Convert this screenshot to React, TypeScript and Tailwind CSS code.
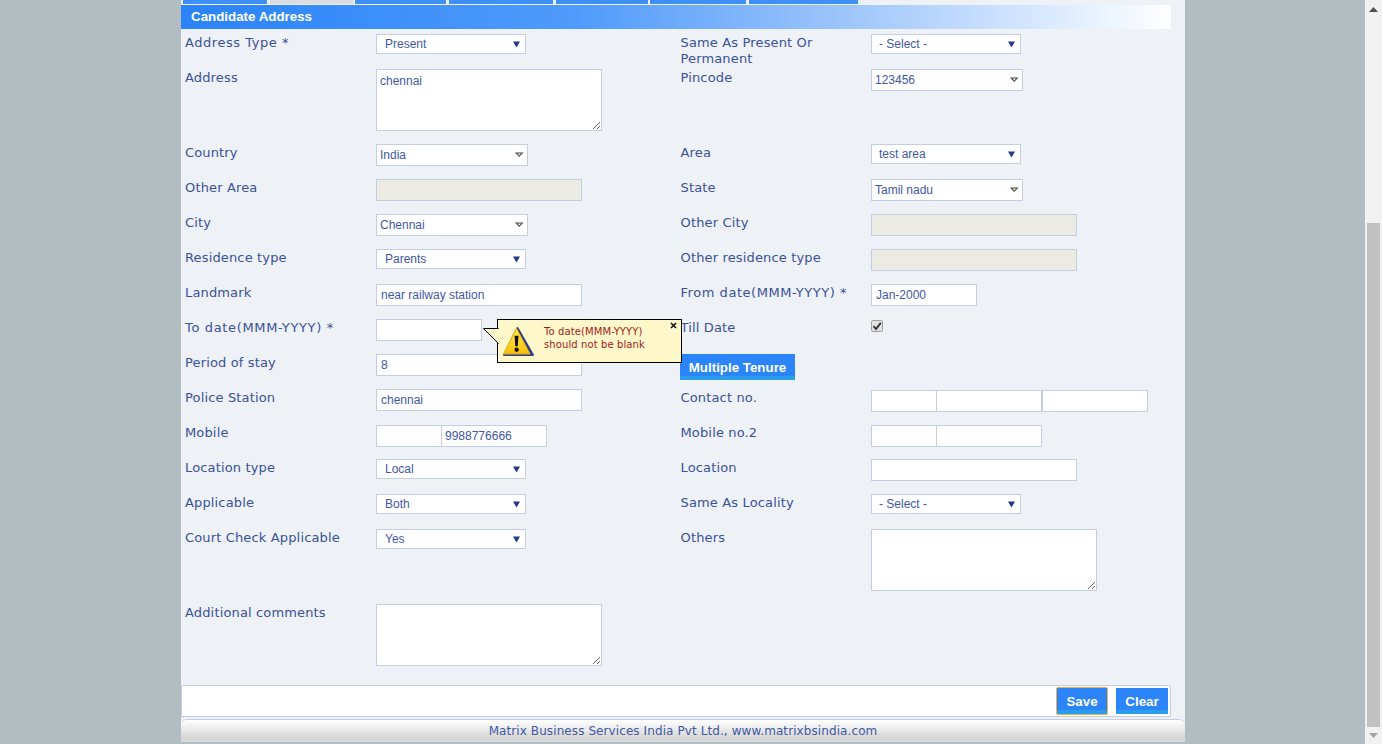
import React from "react";

const labelCls = "text-[13px] leading-4 tracking-[0.15px] text-[#3a5299] [font-family:'DejaVu_Sans',Verdana,sans-serif]";
const fieldCls = "border border-[#c5cde3] text-[12px] text-[#3f58a3] [font-family:'Liberation_Sans',Arial,sans-serif] outline-none";

function Label({ children, cls = "" }: { children: React.ReactNode; cls?: string }) {
  return <div className={`${labelCls} pl-1 pt-[1px] pr-6 ${cls}`}>{children}</div>;
}

function SelectA({ value, right = false }: { value: string; right?: boolean }) {
  return (
    <div className={`${fieldCls} w-[150px] h-5 bg-white flex items-center justify-between ${right ? "pl-[7px]" : "pl-2"} pr-[5px]`}>
      <span>{value}</span>
      <svg width="7" height="7" viewBox="0 0 7 7"><path d="M0 0.5h7L3.5 6.5z" fill="#23398a" /></svg>
    </div>
  );
}

function SelectB({ value }: { value: string }) {
  return (
    <div className={`${fieldCls} w-[152px] h-[22px] bg-white flex items-center justify-between pl-[3px] pr-[3px]`}>
      <span>{value}</span>
      <svg width="9" height="6" viewBox="0 0 9 6">
        <path d="M0 0.5h8.5L4.2 5z" fill="#444" />
        <path d="M2.4 1.5h3.8L4.2 3.4z" fill="#eee" />
      </svg>
    </div>
  );
}

function TextInput({ w, value = "", disabled = false, cls = "" }: { w: string; value?: string; disabled?: boolean; cls?: string }) {
  return (
    <input
      readOnly
      value={value}
      className={`${fieldCls} ${w} block h-[22px] px-[4px] ${disabled ? "bg-[#ebebe4]" : "bg-white"} ${cls}`}
    />
  );
}

function Area({ value = "" }: { value?: string }) {
  return (
    <textarea
      readOnly
      value={value}
      className={`${fieldCls} w-[226px] h-[62px] bg-white px-[3px] py-[2px] block resize`}
    />
  );
}

function Btn({ children, cls }: { children: React.ReactNode; cls: string }) {
  return (
    <button className={`pt-px bg-[linear-gradient(#2b84f8_0,#2b84f8_84%,#2a9ded_84%,#2a9ded_100%)] text-white font-bold text-[13.33px] [font-family:'Liberation_Sans',Arial,sans-serif] ${cls}`}>
      {children}
    </button>
  );
}

type Row = { h: string; a: string; af: React.ReactNode; b: string; bf: React.ReactNode; at?: string; bt?: string };

const rows: Row[] = [
  { h: "h-[35px]", a: "Address Type *", at: "tracking-[0.55px]", af: <SelectA value="Present" />, b: "Same As Present Or Permanent", bf: <SelectA right value="- Select -" /> },
  { h: "h-[75px]", a: "Address", af: <Area value="chennai" />, b: "Pincode", bf: <SelectB value="123456" /> },
  { h: "h-[35px]", a: "Country", af: <SelectB value="India" />, b: "Area", bf: <SelectA right value="test area" /> },
  { h: "h-[35px]", a: "Other Area", af: <TextInput w="w-[206px]" disabled />, b: "State", bf: <SelectB value="Tamil nadu" /> },
  { h: "h-[35px]", a: "City", af: <SelectB value="Chennai" />, b: "Other City", bf: <TextInput w="w-[206px]" disabled /> },
  { h: "h-[35px]", a: "Residence type", af: <SelectA value="Parents" />, b: "Other residence type", bf: <TextInput w="w-[206px]" disabled /> },
  { h: "h-[35px]", a: "Landmark", af: <TextInput w="w-[206px]" value="near railway station" />, b: "From date(MMM-YYYY) *", bt: "tracking-[0.55px] whitespace-nowrap", bf: <TextInput w="w-[106px]" value="Jan-2000" /> },
  {
    h: "h-[35px]", a: "To date(MMM-YYYY) *", at: "tracking-[0.65px]", af: <TextInput w="w-[106px]" />, b: "Till Date",
    bf: (
      <div className="w-[12px] h-[12px] mt-[1px] rounded-[2px] border border-[#a0a0a0] bg-[#e2e2e2] flex items-center justify-center">
        <svg width="10" height="10" viewBox="0 0 10 10"><path d="M1.5 5.2 4 8l4.8-6.2" fill="none" stroke="#333" strokeWidth="1.9" /></svg>
      </div>
    ),
  },
  { h: "h-[35px]", a: "Period of stay", af: <TextInput w="w-[206px]" value="8" />, b: "", bf: null },
  {
    h: "h-[35px]", a: "Police Station", af: <TextInput w="w-[206px]" value="chennai" />, b: "Contact no.",
    bf: (
      <div className="flex mt-px">
        <TextInput w="w-[66px]" />
        <TextInput w="w-[106px]" cls="-ml-px" />
        <TextInput w="w-[106px]" />
      </div>
    ),
  },
  {
    h: "h-[35px]", a: "Mobile",
    af: (
      <div className="flex mt-px">
        <TextInput w="w-[66px]" />
        <TextInput w="w-[106px]" cls="-ml-px !pl-[3px]" value="9988776666" />
      </div>
    ),
    b: "Mobile no.2",
    bf: (
      <div className="flex mt-px">
        <TextInput w="w-[66px]" />
        <TextInput w="w-[106px]" cls="-ml-px" />
      </div>
    ),
  },
  { h: "h-[35px]", a: "Location type", af: <SelectA value="Local" />, b: "Location", bf: <TextInput w="w-[206px]" /> },
  { h: "h-[35px]", a: "Applicable", af: <SelectA value="Both" />, b: "Same As Locality", bf: <SelectA right value="- Select -" /> },
  { h: "h-[75px]", a: "Court Check Applicable", af: <SelectA value="Yes" />, b: "Others", bf: <Area /> },
  { h: "h-[81px]", a: "Additional comments", af: <Area />, b: "", bf: null },
];

function Tooltip() {
  return (
    <div className="absolute left-[121px] top-0 z-10 w-[185px] h-[44px] bg-[#fdf7c9] border border-black flex">
      <svg className="absolute left-[-15px] top-[8px]" width="16" height="24" viewBox="0 0 16 24">
        <path d="M16 0.5H0.5L16 16z" fill="#fdf7c9" />
        <path d="M15.5 0.5H0.5L15.5 15.5" fill="none" stroke="#000" strokeWidth="1" />
      </svg>
      <svg className="ml-[4px] mt-[6px] shrink-0" width="33" height="32" viewBox="0 0 32 31">
        <defs>
          <linearGradient id="warn" x1="0" y1="0" x2="0" y2="1">
            <stop offset="0" stopColor="#fff04f" />
            <stop offset="1" stopColor="#f7bd0c" />
          </linearGradient>
        </defs>
        <path d="M15 2 30 28H2z" fill="#2c3b8a" stroke="#2c3b8a" strokeWidth="2" strokeLinejoin="round" />
        <path d="M14 2.5 27 27H1.5z" fill="url(#warn)" stroke="#ecb808" strokeWidth="1" strokeLinejoin="round" />
        <path d="M12.2 9.5h3.8l-.7 10h-2.4z" fill="#111" />
        <circle cx="14.2" cy="23" r="2.1" fill="#111" />
      </svg>
      <div className="ml-[9px] mt-[5px] text-[10px] leading-[13px] text-[#a01c1c] tracking-[0.1px] [font-family:'DejaVu_Sans',Verdana,sans-serif]">
        To date(MMM-YYYY)
        <br />
        should not be blank
      </div>
      <svg className="absolute right-[4px] top-[2px]" width="7" height="7" viewBox="0 0 7 7">
        <path d="M1 1l5 5M6 1 1 6" stroke="#111" strokeWidth="1.6" />
      </svg>
    </div>
  );
}

export default function App() {
  const tabs = [
    "w-[84px] ml-[2px]",
    "w-[83px] ml-[3px] !bg-[#d9dce3]",
    "w-[91px] ml-[2px]",
    "w-[104px] ml-[3px]",
    "w-[92px] ml-[3px]",
    "w-[96px] ml-[2px]",
    "w-[109px] ml-[3px]",
  ];
  return (
    <div className="flex h-[744px] w-[1382px] overflow-hidden bg-[#b2bdc2]">
      <div className="w-[181px] shrink-0" />
      <div className="w-[1004px] shrink-0 flex flex-col h-[742px] bg-[#eef1f5]">
        <div className="flex h-[4px] shrink-0 w-[990px]">
          {tabs.map((t, i) => (
            <div key={i} className={`${t} bg-[#3f8ff8]`} />
          ))}
        </div>
        <div className="h-px shrink-0" />
        <div className="w-[990px] h-6 shrink-0 pl-[10px] pb-px flex items-center bg-[linear-gradient(90deg,#2b83f8_0%,#4f9bfb_40%,#8fbdfb_62%,#c3dcfd_80%,#ffffff_100%)] text-white text-[13.33px] font-bold [font-family:'Liberation_Sans',Arial,sans-serif]">
          Candidate Address
        </div>
        <div className="h-[5px] shrink-0" />
        <div className="w-[990px] shrink-0">
          {rows.map((r, i) => (
            <div key={i} className={`grid grid-cols-[195px_304.5px_190.5px_1fr] ${r.h}`}>
              <Label cls={r.at}>{r.a}</Label>
              <div className="relative">
                {r.af}
                {i === 7 && <Tooltip />}
              </div>
              <div className={i === 8 ? "-ml-[0.5px]" : `${labelCls} pr-6 pt-[1px] ${r.bt ?? ""}`}>
                {i === 8 ? <Btn cls="block w-[115px] h-[26px]">Multiple Tenure</Btn> : r.b}
              </div>
              <div>{r.bf}</div>
            </div>
          ))}
        </div>
        <div className="w-[990px] h-[32px] shrink-0 bg-white border border-[#c5cde3] flex items-center justify-end pr-[2px] gap-2">
          <Btn cls="w-[52px] h-[28px] border border-[#e6b04e] rounded-[2px]">Save</Btn>
          <Btn cls="w-[52px] h-[26px]">Clear</Btn>
        </div>
        <div className="h-[2px] shrink-0" />
        <div className="flex-1 rounded-t-[6px] border-t border-[#c5cde3] bg-[linear-gradient(#ffffff,#f0f0f0_30%,#d6d6d6_80%,#d8d8d8)] flex items-center justify-center text-[12px] tracking-[0.09px] text-[#3f58a3] [font-family:'DejaVu_Sans',Verdana,sans-serif]">
          Matrix Business Services India Pvt Ltd., www.matrixbsindia.com
        </div>
      </div>
      <div className="flex-1" />
      <div className="w-[17px] shrink-0 bg-[#f1f1f1] flex flex-col items-center">
        <svg className="mt-[7px]" width="9" height="5" viewBox="0 0 9 5"><path d="M4.5 0 9 5H0z" fill="#505050" /></svg>
        <div className="mt-[211px] w-[13px] h-[504px] bg-[#c1c1c1]" />
        <svg className="mt-[6px]" width="9" height="5" viewBox="0 0 9 5"><path d="M0 0h9L4.5 5z" fill="#a3a3a3" /></svg>
      </div>
    </div>
  );
}
